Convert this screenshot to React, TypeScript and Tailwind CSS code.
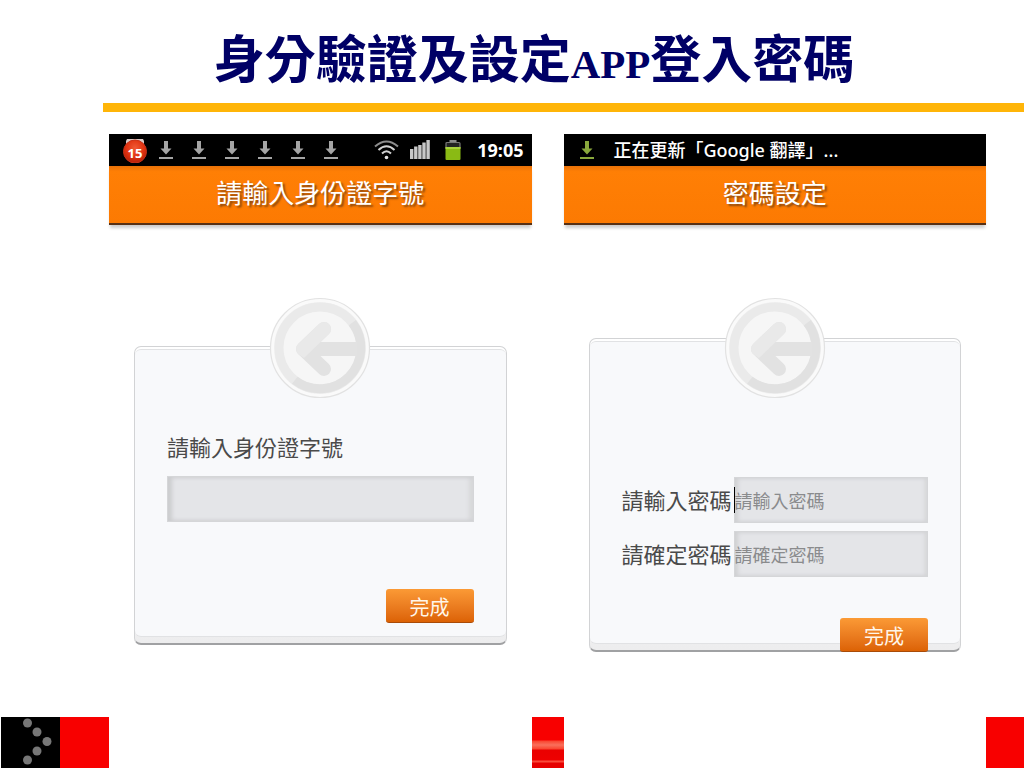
import type { ReactNode } from "react";

const COLUMNS = "grid grid-cols-[109px_minmax(0,1fr)_32px_minmax(0,1fr)_38px]";
const DOWNLOADS = [0, 1, 2, 3, 4, 5];

function DownloadIcon({ color }: { color: string }) {
  return (
    <svg width="14" height="19" viewBox="0 0 14 19" fill={color}>
      <path d="M5 0h4v7.500h3.500L7 13.500L1.500 7.500H5z" />
      <rect y="16" width="14" height="2" />
    </svg>
  );
}

function NotificationBadge() {
  return (
    <div className="relative mr-[11px] h-[26px] w-[26px]">
      <svg width="26" height="26" viewBox="0 0 26 26">
        <defs>
          <radialGradient id="badge" cx="50%" cy="35%" r="65%">
            <stop offset="0" stopColor="#f05a35" />
            <stop offset="0.6" stopColor="#e03210" />
            <stop offset="1" stopColor="#b51f08" />
          </radialGradient>
        </defs>
        <path d="M5 2h16l1 2v6H4V4z" fill="#d9c8c5" />
        <circle cx="13" cy="14.500" r="11.500" fill="url(#badge)" stroke="#c93218" />
      </svg>
      <span className="absolute inset-x-0 top-2 text-center text-[13px] leading-[16px] font-bold text-white">15</span>
    </div>
  );
}

function WifiIcon() {
  return (
    <svg width="25" height="20" viewBox="0 0 25 20" fill="none" stroke="#d2d2d2" strokeWidth="2">
      <path d="M1 6.5Q12.5-3.5 24 6.5" stroke="#8c8c8c" />
      <path d="M4.5 10Q12.5 2.500 20.500 10" />
      <path d="M8 13.500Q12.500 9 17 13.500" />
      <circle cx="12.500" cy="17.500" r="1.800" fill="#e2e2e2" stroke="none" />
    </svg>
  );
}

function SignalIcon() {
  return (
    <svg width="20" height="20" viewBox="0 0 20 20" fill="#c8c8c8">
      <rect x="0" y="9" width="3.400" height="10" />
      <rect x="4.100" y="6.500" width="3.400" height="12.500" />
      <rect x="8.200" y="5" width="3.400" height="14" />
      <rect x="12.300" y="2.500" width="3.400" height="16.500" />
      <rect x="16.400" y="0" width="3.400" height="19" />
    </svg>
  );
}

function BatteryIcon() {
  return (
    <svg width="16" height="21" viewBox="0 0 16 21">
      <rect x="4.500" y="0" width="7" height="3" fill="#8a8a8a" />
      <path d="M1 8V3.500Q1 2.500 2 2.500H14Q15 2.500 15 3.500V8" fill="#222" stroke="#777" strokeWidth="1.200" />
      <rect x="0.500" y="7" width="15" height="13" rx="1" fill="#8aba14" />
      <rect x="0.500" y="7" width="15" height="2" fill="#a9d23c" />
    </svg>
  );
}

function BackEmblem() {
  return (
    <svg
      className="absolute top-[72px] left-1/2 -translate-x-1/2"
      width="102"
      height="102"
      viewBox="0 0 102 102"
    >
      <circle cx="51" cy="51" r="49.500" fill="#fafafa" stroke="#e2e2e2" strokeWidth="1.200" />
      <circle cx="51" cy="51" r="46" fill="#f2f2f2" />
      <circle cx="51" cy="51" r="41" fill="#f6f6f6" stroke="#eaeaea" strokeWidth="9" />
      <path d="M83.300 25.800A41 41 0 0 1 25.800 83.300" fill="none" stroke="#e1e1e1" strokeWidth="9" />
      <path d="M44 52H88" stroke="#e2e2e2" strokeWidth="14" />
      <path d="M55 32L34 52L55 72" fill="none" stroke="#e2e2e2" strokeWidth="14" strokeLinecap="round" strokeLinejoin="round" />
      <path d="M29 47L50 27A7 7 0 0 1 60 37L35 61L29 57Q25 52 29 47Z" fill="#e9e9e9" />
    </svg>
  );
}

function Phone({ status, title, children }: { status: ReactNode; title: string; children: ReactNode }) {
  return (
    <section className="bg-white">
      <div className="flex h-8 items-center overflow-hidden bg-black font-['Noto_Sans','Noto_Sans_CJK_TC',sans-serif] text-white">
        {status}
      </div>
      <h2 className="h-[59px] border-b-2 border-[#573014] bg-linear-to-b from-[#e97108] via-[#ff7f05] via-10% to-[#fc7a02] text-center text-[26px] leading-[52px] font-normal text-white shadow-[0_4px_3px_-1px_rgba(0,0,0,0.2)] [text-shadow:2px_2px_2px_rgba(90,50,20,0.7)]">
        {title}
      </h2>
      <div className="relative flow-root px-[25px]">
        {children}
        <BackEmblem />
      </div>
    </section>
  );
}

function Card({ children, className }: { children: ReactNode; className: string }) {
  return (
    <form
      className={`rounded-[7px] border border-b-2 border-[#d2d3d5] border-b-[#a0a1a3] bg-linear-to-b from-white to-[#ededee] pt-0.5 ${className}`}
      onSubmit={(e) => e.preventDefault()}
    >
      {children}
    </form>
  );
}

function DoneButton() {
  return (
    <button
      type="submit"
      className="block h-[34px] w-[88px] rounded-[3px] border-b border-[#a94b08] bg-linear-to-b from-[#fb9a35] to-[#dc6204] pt-px text-[20px] leading-[34px] text-[#fff6ea]"
    >
      完成
    </button>
  );
}

const FIELD =
  "block h-[46px] min-w-0 border border-[#d5d6d8] bg-[#e4e5e8] text-[18px] outline-none placeholder:text-[#8a8b8d] placeholder:opacity-100";

function PasswordRow({ id, text }: { id: string; text: string }) {
  return (
    <div className="flex">
      <label htmlFor={id} className="w-28 shrink-0 text-[22px] leading-[44px] whitespace-nowrap text-[#4a4a4a]">
        {text}
      </label>
      <input
        id={id}
        type="password"
        placeholder={text}
        className={`${FIELD} w-0 grow shadow-[inset_3px_0_4px_#cfd0d2,inset_-3px_0_3px_#d9dadc]`}
      />
    </div>
  );
}

export default function App() {
  return (
    <div className="flex min-h-screen flex-col overflow-hidden bg-white font-['Noto_Sans_CJK_TC',sans-serif]">
      <header>
        <h1 className="h-[103px] pl-11 text-center font-['Liberation_Serif','Noto_Sans_CJK_TC',serif] text-[51px] leading-[122px] font-bold text-[#000066]">
          身分驗證及設定<span className="text-[41px]">APP</span>登入密碼
        </h1>
        <div className="ml-[103px] h-[9px] bg-[#ffb508]" />
      </header>

      <main className={`${COLUMNS} grow pt-[22px]`}>
        <div />
        <Phone
          title="請輸入身份證字號"
          status={
            <div className="flex grow items-center pr-2 pl-[13px]">
              <NotificationBadge />
              <div className="flex gap-[19px]">
                {DOWNLOADS.map((n) => (
                  <DownloadIcon key={n} color="#a5a5a5" />
                ))}
              </div>
              <div className="ml-auto flex items-center">
                <WifiIcon />
                <span className="w-[11px]" />
                <SignalIcon />
                <span className="w-[15px]" />
                <BatteryIcon />
                <span className="ml-4 text-[18px] leading-[30px] font-bold">19:05</span>
              </div>
            </div>
          }
        >
          <Card className="mt-[121px] pb-1.5">
            <div className="rounded-[6px] border-y border-[#e1e2e4] bg-[#f8f9fb] px-8 pt-[82px] pb-[13px]">
              <label htmlFor="national-id" className="block text-[22px] leading-[28px] text-[#4a4a4a]">
                請輸入身份證字號
              </label>
              <input
                id="national-id"
                className={`${FIELD} mt-4 w-full shadow-[inset_4px_0_4px_#cbccce,inset_-4px_0_4px_#d6d7d9]`}
              />
              <div className="mt-[67px] flex justify-end">
                <DoneButton />
              </div>
            </div>
          </Card>
        </Phone>
        <div />
        <Phone
          title="密碼設定"
          status={
            <div className="flex items-center pl-4">
              <DownloadIcon color="#8aa83c" />
              <span className="ml-5 text-[18px] leading-[30px] font-medium">正在更新「Google 翻譯」...</span>
            </div>
          }
        >
          <Card className="mt-[113px]">
            <div className="rounded-[6px] border-y border-[#e1e2e4] bg-[#f8f9fb] px-8 pt-[135px]">
              <div className="relative">
                <PasswordRow id="password" text="請輸入密碼" />
                {/* text cursor */}
                <span className="absolute top-[10px] left-28 h-[26px] w-px bg-black" />
              </div>
              <div className="mt-2">
                <PasswordRow id="confirm" text="請確定密碼" />
              </div>
              <div className="relative mt-[41px] -mb-[9px] flex justify-end">
                <DoneButton />
              </div>
            </div>
            <div className="h-1.5" />
          </Card>
        </Phone>
      </main>

      <footer className={`${COLUMNS} h-[51px]`}>
        <div className="flex pl-px">
          <svg className="bg-black" width="59" height="51" viewBox="0 0 59 51" fill="#777">
            <circle cx="26.500" cy="6" r="4.500" />
            <circle cx="36" cy="15" r="4.500" />
            <circle cx="46" cy="24.500" r="4.500" />
            <circle cx="36" cy="34" r="4.500" />
            <circle cx="26.500" cy="43" r="4.500" />
          </svg>
          <div className="grow bg-[#f80000]" />
        </div>
        <div />
        <div className="bg-[linear-gradient(#f80000_23px,#f9452f_24px,#fa705c_28px,#f9452f_32px,#ea0000_33px,#ee0000_43px,#fa4a3a_44px,#fa4a3a_45px,#e60000_46px)]" />
        <div />
        <div className="bg-[#f80000]" />
      </footer>
    </div>
  );
}
